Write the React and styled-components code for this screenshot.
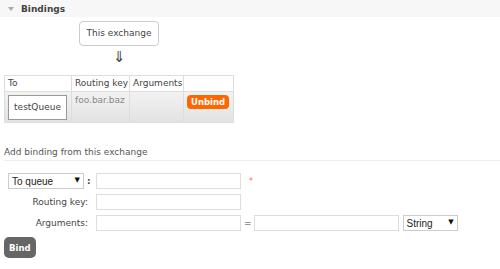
import React from 'react';
import styled, { createGlobalStyle } from 'styled-components';

const GlobalStyle = createGlobalStyle`
    body {
        margin: 0;
        background: #fff;
        font-family: 'DejaVu Sans', Verdana, sans-serif;
        font-size: 9px;
        color: #444;
    }
`;

const Page = styled.div`
    width: 500px;
    height: 269px;
    overflow: hidden;
`;

const SectionHeader = styled.h2`
    margin: 0;
    height: 17px;
    display: flex;
    align-items: center;
    gap: 7px;
    padding-left: 8px;
    background: #f7f7f7;
    font-size: 9px;
    font-weight: bold;
    color: #444;
`;

const Caret = styled.span`
    width: 0;
    height: 0;
    border-left: 3.5px solid transparent;
    border-right: 3.5px solid transparent;
    border-top: 4px solid #aaa;
`;

const Body = styled.div`
    padding-left: 4px;
`;

const Diagram = styled.div`
    display: inline-flex;
    flex-direction: column;
    align-items: center;
`;

const SourceBox = styled.div`
    margin-top: 4px;
    height: 23px;
    line-height: 23px;
    padding: 0 7px;
    border: 1px solid #ccc;
    border-radius: 4px;
    background: #fff;
    color: #444;
`;

const Arrow = styled.div`
    font-family: 'DejaVu Sans', sans-serif;
    font-size: 15px;
    line-height: 16px;
    margin-top: 3px;
    margin-bottom: 10px;
    color: #444;
`;

const Table = styled.table`
    border-collapse: collapse;
    table-layout: fixed;
    width: 229px;
    border: 1px solid #ddd;
    th, td {
        border: 1px solid #ddd;
        padding: 0 3px;
        text-align: left;
        vertical-align: top;
        white-space: nowrap;
        overflow: hidden;
    }
    th {
        height: 15px;
        font-weight: normal;
        color: #444;
        background: #fff;
        line-height: 15px;
    }
`;

const Col = styled.col`
    width: ${(p) => p.$w}px;
`;

const Row = styled.tr`
    height: 31px;
    background: linear-gradient(#f2f2f2, #e2e2e2);
    td {
        padding-top: 3px;
        color: #888;
    }
`;

const QueueBox = styled.div`
    display: inline-block;
    box-sizing: border-box;
    width: 59px;
    height: 25px;
    line-height: 23px;
    text-align: center;
    border: 1px solid #999;
    background: #fff;
    color: #444;
`;

const Button = styled.button`
    border: none;
    font-family: inherit;
    font-weight: bold;
    color: #fff;
    cursor: pointer;
    background: ${(p) => (p.$tone === 'danger' ? '#ff6600' : '#666')};
    border-radius: ${(p) => (p.$tone === 'danger' ? '4px' : '5px')};
    padding: ${(p) => (p.$tone === 'danger' ? '0 4px' : '0 5px')};
    height: ${(p) => (p.$tone === 'danger' ? '14px' : '21px')};
    font-size: 8.5px;
`;

const SubHeading = styled.h3`
    margin: 24px 0 0;
    padding-bottom: 3px;
    border-bottom: 1px solid #eee;
    font-size: 9px;
    font-weight: normal;
    color: #555;
`;

const Form = styled.div`
    display: grid;
    grid-template-columns: 92px auto;
    row-gap: 5px;
    margin-top: 12px;
`;

const Label = styled.label`
    display: flex;
    align-items: center;
    justify-content: flex-end;
    padding-right: 8px;
    color: #444;
`;

const Fields = styled.div`
    display: flex;
    align-items: center;
    gap: 4px;
`;

const Input = styled.input`
    box-sizing: border-box;
    width: 145px;
    height: 16px;
    border: 1px solid #ddd;
    padding: 0 3px;
    margin: 0;
`;

const SelectWrap = styled.span`
    position: relative;
    display: inline-flex;
    &::after {
        content: '▼';
        position: absolute;
        right: 4px;
        top: 3px;
        font-size: 7px;
        color: #111;
        pointer-events: none;
    }
`;

const Select = styled.select`
    box-sizing: border-box;
    appearance: none;
    width: ${(p) => p.$w}px;
    height: 16px;
    border: 1px solid #ccc;
    border-radius: 0;
    background: #fff;
    font-family: 'Liberation Sans', Arial, sans-serif;
    font-size: 10px;
    color: #222;
    padding: 0 3px;
    margin: 0;
`;

const Required = styled.span`
    color: #f66;
    font-size: 8px;
    margin-left: 4px;
`;

const Equals = styled.span`
    margin: 0 -2px 0 -1px;
`;

const Colon = styled.span`
    display: flex;
    align-items: center;
    gap: 3px;
    padding-left: 4px;
    font-weight: bold;
    color: #444;
`;

const Footer = styled.div`
    margin-top: 6px;
`;

const App = () => {
    return (
        <Page>
            <GlobalStyle />
            <SectionHeader>
                <Caret />
                Bindings
            </SectionHeader>
            <Body>
                <Diagram>
                    <SourceBox>This exchange</SourceBox>
                    <Arrow>⇓</Arrow>
                    <Table>
                        <colgroup>
                            <Col $w={67} />
                            <Col $w={58} />
                            <Col $w={54} />
                            <Col $w={50} />
                        </colgroup>
                        <thead>
                            <tr>
                                <th>To</th>
                                <th>Routing key</th>
                                <th>Arguments</th>
                                <th></th>
                            </tr>
                        </thead>
                        <tbody>
                            <Row>
                                <td>
                                    <QueueBox>testQueue</QueueBox>
                                </td>
                                <td>foo.bar.baz</td>
                                <td></td>
                                <td>
                                    <Button $tone='danger'>Unbind</Button>
                                </td>
                            </Row>
                        </tbody>
                    </Table>
                </Diagram>
                <SubHeading>Add binding from this exchange</SubHeading>
                <Form>
                    <Colon>
                        <SelectWrap>
                            <Select $w={76} defaultValue='queue'>
                                <option value='queue'>To queue</option>
                                <option value='exchange'>To exchange</option>
                            </Select>
                        </SelectWrap>
                        :
                    </Colon>
                    <Fields>
                        <Input />
                        <Required>*</Required>
                    </Fields>
                    <Label>Routing key:</Label>
                    <Fields>
                        <Input />
                    </Fields>
                    <Label>Arguments:</Label>
                    <Fields>
                        <Input />
                        <Equals>=</Equals>
                        <Input />
                        <SelectWrap>
                            <Select $w={55} defaultValue='string'>
                                <option value='string'>String</option>
                                <option value='number'>Number</option>
                                <option value='boolean'>Boolean</option>
                            </Select>
                        </SelectWrap>
                    </Fields>
                </Form>
                <Footer>
                    <Button>Bind</Button>
                </Footer>
            </Body>
        </Page>
    );
};

export default App;
